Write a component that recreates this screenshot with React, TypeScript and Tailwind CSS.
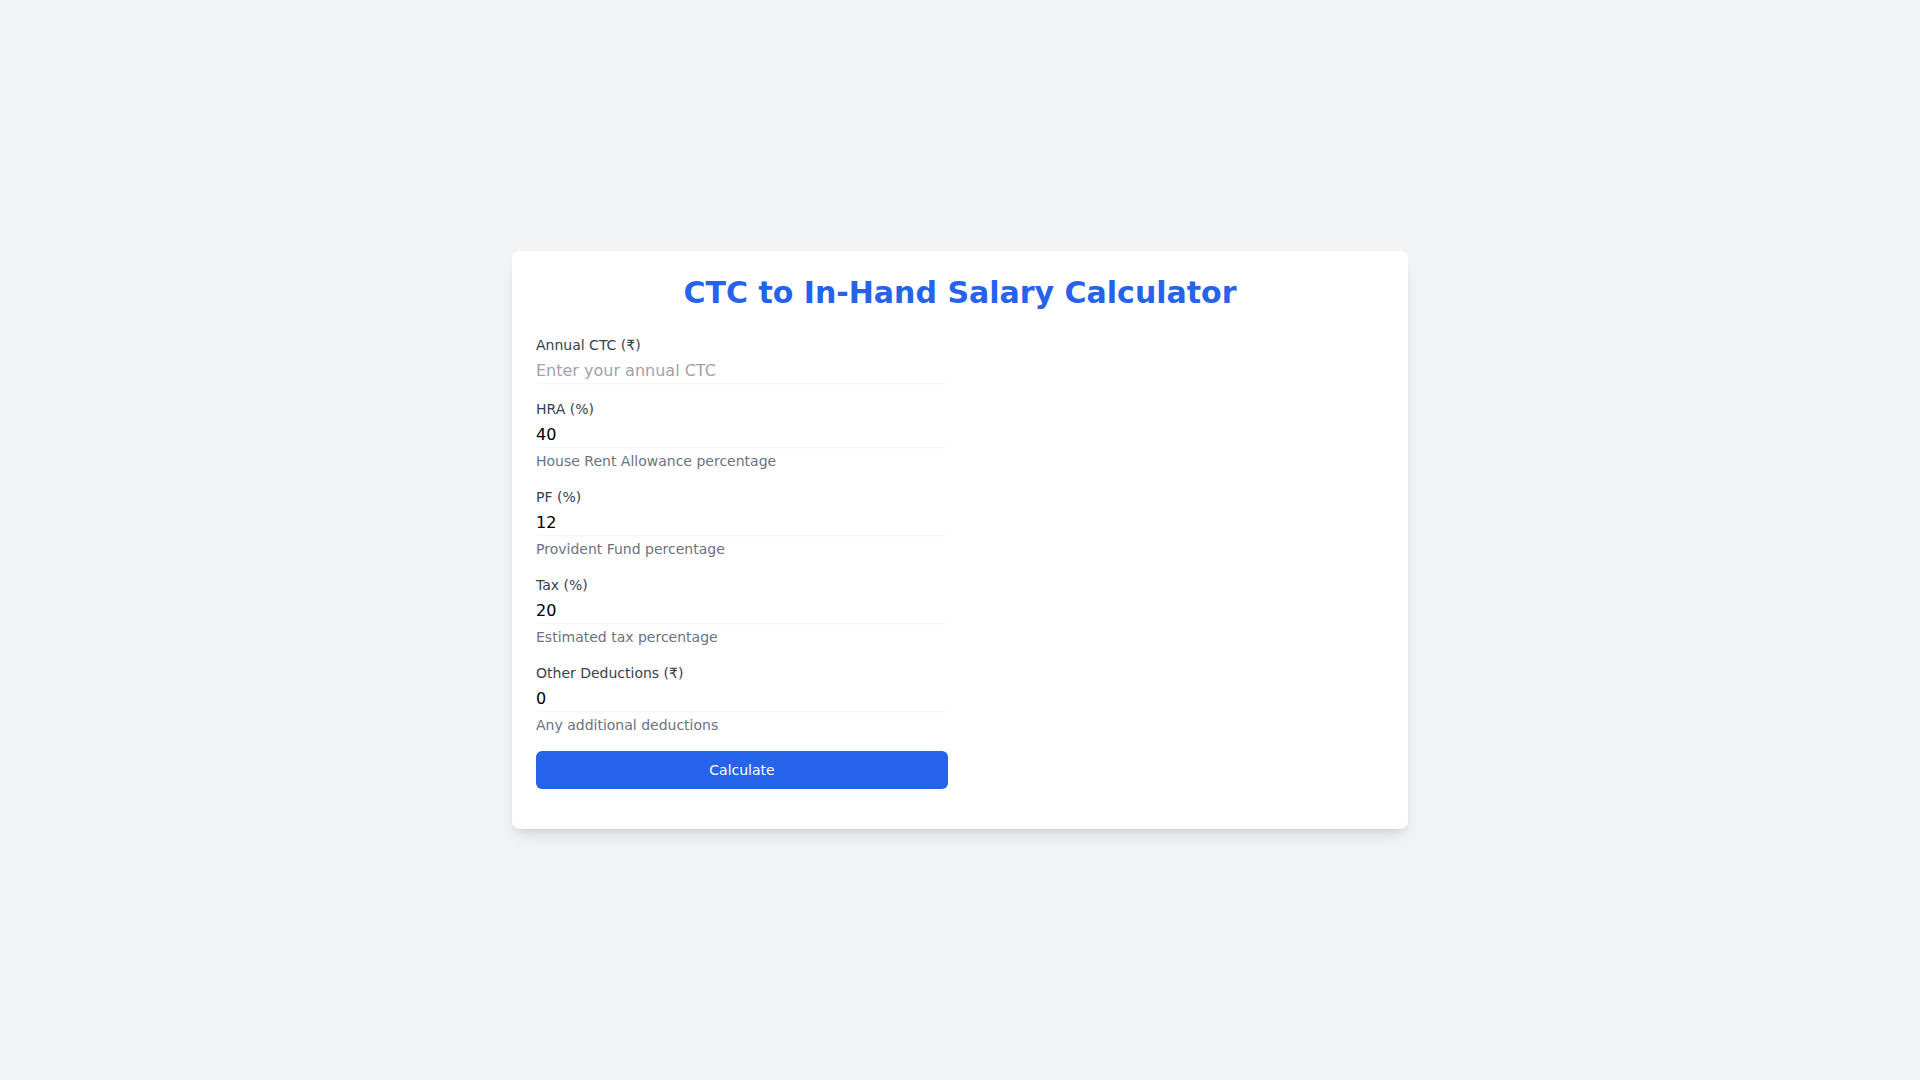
import React, { useState } from 'react';

type Field = {
  id: string;
  label: string;
  placeholder?: string;
  help?: string;
  initial: string;
};

const fields: Field[] = [
  { id: 'ctc', label: 'Annual CTC (₹)', placeholder: 'Enter your annual CTC', initial: '' },
  { id: 'hra', label: 'HRA (%)', help: 'House Rent Allowance percentage', initial: '40' },
  { id: 'pf', label: 'PF (%)', help: 'Provident Fund percentage', initial: '12' },
  { id: 'tax', label: 'Tax (%)', help: 'Estimated tax percentage', initial: '20' },
  { id: 'other', label: 'Other Deductions (₹)', help: 'Any additional deductions', initial: '0' },
];

function App() {
  const [values, setValues] = useState<Record<string, string>>(
    Object.fromEntries(fields.map((f) => [f.id, f.initial]))
  );

  return (
    <div className="min-h-screen bg-[#f3f4f6] flex items-center justify-center font-['DejaVu_Sans',sans-serif]">
      <div className="w-full max-w-4xl bg-white rounded-lg shadow-[0_10px_15px_-3px_rgba(0,0,0,0.1),0_4px_6px_-4px_rgba(0,0,0,0.1)] px-6 pt-6 pb-10">
        <h1 className="text-3xl font-bold text-[#2563eb] text-center mb-6">CTC to In-Hand Salary Calculator</h1>

        <div className="grid grid-cols-2 gap-6">
          {/* Formulär */}
          <div className="space-y-4">
            {fields.map((f) => (
              <div key={f.id}>
                <label htmlFor={f.id} className="block text-sm text-[#374151] mb-1">
                  {f.label}
                </label>
                <input
                  id={f.id}
                  type="number"
                  value={values[f.id]}
                  placeholder={f.placeholder}
                  onChange={(e) => setValues({ ...values, [f.id]: e.target.value })}
                  className="block w-full h-6 rounded-md shadow-[0_1px_2px_0_rgba(0,0,0,0.05)] bg-white text-base text-black placeholder:text-[#9ca3af] outline-none [appearance:textfield] [&::-webkit-inner-spin-button]:appearance-none [&::-webkit-outer-spin-button]:appearance-none"
                />
                {f.help && <p className="mt-1 text-sm text-[#6b7280]">{f.help}</p>}
              </div>
            ))}
            <button className="w-full h-[38px] rounded-md bg-[#2563eb] text-white text-sm">Calculate</button>
          </div>

          {/* Resultat visas här */}
          <div></div>
        </div>
      </div>
    </div>
  );
}

export default App;
